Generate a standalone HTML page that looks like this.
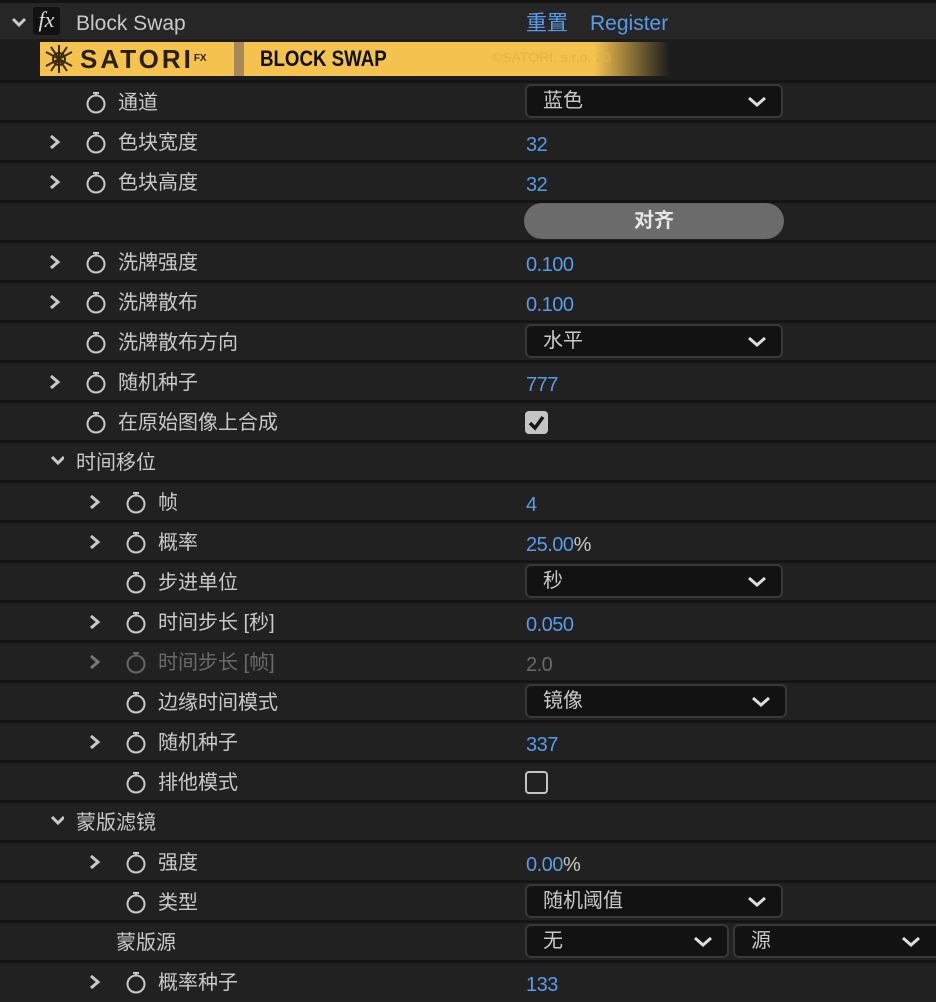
<!DOCTYPE html>
<html><head><meta charset="utf-8"><style>
*{margin:0;padding:0;box-sizing:border-box}
body{width:936px;height:1002px;background:#1f1f1f;overflow:hidden;position:relative;font-family:"Liberation Sans","Noto Sans CJK SC",sans-serif;color:#c9c9c9;font-size:20px}
.hdr{position:absolute;left:0;top:0;width:936px;height:42px;background:#262626;border-top:3px solid #141414}
.r{position:absolute;left:0;width:936px;height:40px;border-top:3px solid #141414;background:#212121}
.t{position:absolute;top:6px;line-height:28px;white-space:nowrap}
.v{position:absolute;left:526px;top:8px;line-height:28px;color:#5a9be8;letter-spacing:-0.5px}
.v span{color:#c9c9c9}
.sw{position:absolute;top:7px;width:22px;height:24px}
.chr{position:absolute;top:11px;width:14px;height:16px}
.dd{position:absolute;left:525px;top:1px;width:258px;height:34px;background:#121212;border:2px solid #383838;border-radius:6px}
.dd .t{left:16px;top:1px}
.dd svg{position:absolute;right:14px;top:10px}
.btn{position:absolute;left:524px;top:0px;width:260px;height:36px;background:#6b6b6b;border-radius:18px;text-align:center;line-height:36px;color:#e6e6e6;font-weight:bold}
.cb{position:absolute;left:525px;top:8px;width:23px;height:23px;border-radius:4px}
.dim{color:#6a6a6a}
</style></head><body>
<div class="hdr">
<svg style="position:absolute;left:10px;top:12px" width="18" height="14"><path d="M3 4 L9 10 L15 4" stroke="#c9c9c9" stroke-width="3" fill="none"/></svg>
<div style="position:absolute;left:33px;top:4px;width:27px;height:28px;background:#111;border-radius:3px;color:#ddd;font-family:'Liberation Serif',serif;font-style:italic;font-size:22px;line-height:26px;text-align:center">fx</div>
<div class="t" style="left:76px;top:7px;font-size:21px">Block Swap</div>
<div class="t" style="left:526px;top:7px;color:#5a9be8;font-size:21px">重置</div>
<div class="t" style="left:590px;top:7px;color:#5a9be8;font-size:21px">Register</div>
</div>
<div style="position:absolute;left:0;top:39px;width:936px;height:42px;background:#1c1c1c"></div>
<div style="position:absolute;left:40px;top:42px;width:630px;height:34px;background:linear-gradient(90deg,#f4c24f 0,#f4c24f 88%,#1c1c1c 100%)">
<svg style="position:absolute;left:3px;top:2px" width="32" height="30"><g stroke="#3a2a10" stroke-width="2" fill="none"><circle cx="16" cy="15" r="6"/><path d="M16 1 L16 29 M3 8 L29 22 M3 22 L29 8 M8 3 L24 27 M24 3 L8 27"/></g></svg>
<div style="position:absolute;left:40px;top:2px;font-size:26px;font-weight:bold;letter-spacing:3px;color:#2a1f0c;line-height:30px">SATORI<span style="font-size:10px;vertical-align:top;letter-spacing:0">FX</span></div>
<div style="position:absolute;left:194px;top:0;width:10px;height:34px;background:#a8875a"></div>
<div style="position:absolute;left:220px;top:2px;font-size:22px;font-weight:bold;color:#111;line-height:30px;transform:scaleX(.85);transform-origin:left">BLOCK SWAP</div>
<div style="position:absolute;left:452px;top:7px;font-size:14px;color:#e2b245">©SATORI, s.r.o. 20</div>
</div>

<div class="r" style="top:80px"><svg class="sw" style="left:85px" viewBox="0 0 22 24"><circle cx="11" cy="14" r="8.5" stroke="#c9c9c9" stroke-width="2" fill="none"/><path d="M8 3h6M11 3v3" stroke="#c9c9c9" stroke-width="2"/></svg><div class="t" style="left:118px">通道</div><div class="dd"><div class="t">蓝色</div><svg width="20" height="12"><path d="M2 2 L10 9 L18 2" stroke="#ddd" stroke-width="3" fill="none"/></svg></div></div>

<div class="r" style="top:120px"><svg class="chr" style="left:48px"><path d="M3 2 L10 8 L3 14" stroke="#c9c9c9" stroke-width="3" fill="none"/></svg><svg class="sw" style="left:85px" viewBox="0 0 22 24"><circle cx="11" cy="14" r="8.5" stroke="#c9c9c9" stroke-width="2" fill="none"/><path d="M8 3h6M11 3v3" stroke="#c9c9c9" stroke-width="2"/></svg><div class="t" style="left:118px">色块宽度</div><div class="v">32</div></div>

<div class="r" style="top:160px"><svg class="chr" style="left:48px"><path d="M3 2 L10 8 L3 14" stroke="#c9c9c9" stroke-width="3" fill="none"/></svg><svg class="sw" style="left:85px" viewBox="0 0 22 24"><circle cx="11" cy="14" r="8.5" stroke="#c9c9c9" stroke-width="2" fill="none"/><path d="M8 3h6M11 3v3" stroke="#c9c9c9" stroke-width="2"/></svg><div class="t" style="left:118px">色块高度</div><div class="v">32</div></div>

<div class="r" style="top:200px"><div class="btn">对齐</div></div>

<div class="r" style="top:240px"><svg class="chr" style="left:48px"><path d="M3 2 L10 8 L3 14" stroke="#c9c9c9" stroke-width="3" fill="none"/></svg><svg class="sw" style="left:85px" viewBox="0 0 22 24"><circle cx="11" cy="14" r="8.5" stroke="#c9c9c9" stroke-width="2" fill="none"/><path d="M8 3h6M11 3v3" stroke="#c9c9c9" stroke-width="2"/></svg><div class="t" style="left:118px">洗牌强度</div><div class="v">0.100</div></div>

<div class="r" style="top:280px"><svg class="chr" style="left:48px"><path d="M3 2 L10 8 L3 14" stroke="#c9c9c9" stroke-width="3" fill="none"/></svg><svg class="sw" style="left:85px" viewBox="0 0 22 24"><circle cx="11" cy="14" r="8.5" stroke="#c9c9c9" stroke-width="2" fill="none"/><path d="M8 3h6M11 3v3" stroke="#c9c9c9" stroke-width="2"/></svg><div class="t" style="left:118px">洗牌散布</div><div class="v">0.100</div></div>

<div class="r" style="top:320px"><svg class="sw" style="left:85px" viewBox="0 0 22 24"><circle cx="11" cy="14" r="8.5" stroke="#c9c9c9" stroke-width="2" fill="none"/><path d="M8 3h6M11 3v3" stroke="#c9c9c9" stroke-width="2"/></svg><div class="t" style="left:118px">洗牌散布方向</div><div class="dd"><div class="t">水平</div><svg width="20" height="12"><path d="M2 2 L10 9 L18 2" stroke="#ddd" stroke-width="3" fill="none"/></svg></div></div>

<div class="r" style="top:360px"><svg class="chr" style="left:48px"><path d="M3 2 L10 8 L3 14" stroke="#c9c9c9" stroke-width="3" fill="none"/></svg><svg class="sw" style="left:85px" viewBox="0 0 22 24"><circle cx="11" cy="14" r="8.5" stroke="#c9c9c9" stroke-width="2" fill="none"/><path d="M8 3h6M11 3v3" stroke="#c9c9c9" stroke-width="2"/></svg><div class="t" style="left:118px">随机种子</div><div class="v">777</div></div>

<div class="r" style="top:400px"><svg class="sw" style="left:85px" viewBox="0 0 22 24"><circle cx="11" cy="14" r="8.5" stroke="#c9c9c9" stroke-width="2" fill="none"/><path d="M8 3h6M11 3v3" stroke="#c9c9c9" stroke-width="2"/></svg><div class="t" style="left:118px">在原始图像上合成</div><div class="cb" style="background:#c4c4c4"><svg width="23" height="23"><path d="M5 12 L10 17 L18 6" stroke="#151515" stroke-width="3.5" fill="none"/></svg></div></div>

<div class="r" style="top:440px"><svg class="chr" style="left:50px;top:12px" width="16" height="12"><path d="M2 2 L8 8 L14 2" stroke="#c9c9c9" stroke-width="3" fill="none"/></svg><div class="t" style="left:76px">时间移位</div></div>

<div class="r" style="top:480px"><svg class="chr" style="left:88px"><path d="M3 2 L10 8 L3 14" stroke="#c9c9c9" stroke-width="3" fill="none"/></svg><svg class="sw" style="left:125px" viewBox="0 0 22 24"><circle cx="11" cy="14" r="8.5" stroke="#c9c9c9" stroke-width="2" fill="none"/><path d="M8 3h6M11 3v3" stroke="#c9c9c9" stroke-width="2"/></svg><div class="t" style="left:158px">帧</div><div class="v">4</div></div>

<div class="r" style="top:520px"><svg class="chr" style="left:88px"><path d="M3 2 L10 8 L3 14" stroke="#c9c9c9" stroke-width="3" fill="none"/></svg><svg class="sw" style="left:125px" viewBox="0 0 22 24"><circle cx="11" cy="14" r="8.5" stroke="#c9c9c9" stroke-width="2" fill="none"/><path d="M8 3h6M11 3v3" stroke="#c9c9c9" stroke-width="2"/></svg><div class="t" style="left:158px">概率</div><div class="v">25.00<span>%</span></div></div>

<div class="r" style="top:560px"><svg class="sw" style="left:125px" viewBox="0 0 22 24"><circle cx="11" cy="14" r="8.5" stroke="#c9c9c9" stroke-width="2" fill="none"/><path d="M8 3h6M11 3v3" stroke="#c9c9c9" stroke-width="2"/></svg><div class="t" style="left:158px">步进单位</div><div class="dd"><div class="t">秒</div><svg width="20" height="12"><path d="M2 2 L10 9 L18 2" stroke="#ddd" stroke-width="3" fill="none"/></svg></div></div>

<div class="r" style="top:600px"><svg class="chr" style="left:88px"><path d="M3 2 L10 8 L3 14" stroke="#c9c9c9" stroke-width="3" fill="none"/></svg><svg class="sw" style="left:125px" viewBox="0 0 22 24"><circle cx="11" cy="14" r="8.5" stroke="#c9c9c9" stroke-width="2" fill="none"/><path d="M8 3h6M11 3v3" stroke="#c9c9c9" stroke-width="2"/></svg><div class="t" style="left:158px">时间步长 [秒]</div><div class="v">0.050</div></div>

<div class="r" style="top:640px"><svg class="chr" style="left:88px"><path d="M3 2 L10 8 L3 14" stroke="#777" stroke-width="3" fill="none"/></svg><svg class="sw" style="left:125px" viewBox="0 0 22 24"><circle cx="11" cy="14" r="8.5" stroke="#666" stroke-width="2" fill="none"/><path d="M8 3h6M11 3v3" stroke="#666" stroke-width="2"/></svg><div class="t dim" style="left:158px">时间步长 [帧]</div><div class="v dim">2.0</div></div>

<div class="r" style="top:680px"><svg class="sw" style="left:125px" viewBox="0 0 22 24"><circle cx="11" cy="14" r="8.5" stroke="#c9c9c9" stroke-width="2" fill="none"/><path d="M8 3h6M11 3v3" stroke="#c9c9c9" stroke-width="2"/></svg><div class="t" style="left:158px">边缘时间模式</div><div class="dd" style="width:262px"><div class="t">镜像</div><svg width="20" height="12"><path d="M2 2 L10 9 L18 2" stroke="#ddd" stroke-width="3" fill="none"/></svg></div></div>

<div class="r" style="top:720px"><svg class="chr" style="left:88px"><path d="M3 2 L10 8 L3 14" stroke="#c9c9c9" stroke-width="3" fill="none"/></svg><svg class="sw" style="left:125px" viewBox="0 0 22 24"><circle cx="11" cy="14" r="8.5" stroke="#c9c9c9" stroke-width="2" fill="none"/><path d="M8 3h6M11 3v3" stroke="#c9c9c9" stroke-width="2"/></svg><div class="t" style="left:158px">随机种子</div><div class="v">337</div></div>

<div class="r" style="top:760px"><svg class="sw" style="left:125px" viewBox="0 0 22 24"><circle cx="11" cy="14" r="8.5" stroke="#c9c9c9" stroke-width="2" fill="none"/><path d="M8 3h6M11 3v3" stroke="#c9c9c9" stroke-width="2"/></svg><div class="t" style="left:158px">排他模式</div><div class="cb" style="border:2.5px solid #c4c4c4"></div></div>

<div class="r" style="top:800px"><svg class="chr" style="left:50px;top:12px" width="16" height="12"><path d="M2 2 L8 8 L14 2" stroke="#c9c9c9" stroke-width="3" fill="none"/></svg><div class="t" style="left:76px">蒙版滤镜</div></div>

<div class="r" style="top:840px"><svg class="chr" style="left:88px"><path d="M3 2 L10 8 L3 14" stroke="#c9c9c9" stroke-width="3" fill="none"/></svg><svg class="sw" style="left:125px" viewBox="0 0 22 24"><circle cx="11" cy="14" r="8.5" stroke="#c9c9c9" stroke-width="2" fill="none"/><path d="M8 3h6M11 3v3" stroke="#c9c9c9" stroke-width="2"/></svg><div class="t" style="left:158px">强度</div><div class="v">0.00<span>%</span></div></div>

<div class="r" style="top:880px"><svg class="sw" style="left:125px" viewBox="0 0 22 24"><circle cx="11" cy="14" r="8.5" stroke="#c9c9c9" stroke-width="2" fill="none"/><path d="M8 3h6M11 3v3" stroke="#c9c9c9" stroke-width="2"/></svg><div class="t" style="left:158px">类型</div><div class="dd"><div class="t">随机阈值</div><svg width="20" height="12"><path d="M2 2 L10 9 L18 2" stroke="#ddd" stroke-width="3" fill="none"/></svg></div></div>

<div class="r" style="top:920px"><div class="t" style="left:116px">蒙版源</div><div class="dd" style="width:204px"><div class="t">无</div><svg width="20" height="12"><path d="M2 2 L10 9 L18 2" stroke="#ddd" stroke-width="3" fill="none"/></svg></div><div class="dd" style="left:733px;width:210px"><div class="t">源</div><svg width="20" height="12" style="right:20px"><path d="M2 2 L10 9 L18 2" stroke="#ddd" stroke-width="3" fill="none"/></svg></div></div>

<div class="r" style="top:960px;height:42px"><svg class="chr" style="left:88px"><path d="M3 2 L10 8 L3 14" stroke="#c9c9c9" stroke-width="3" fill="none"/></svg><svg class="sw" style="left:125px" viewBox="0 0 22 24"><circle cx="11" cy="14" r="8.5" stroke="#c9c9c9" stroke-width="2" fill="none"/><path d="M8 3h6M11 3v3" stroke="#c9c9c9" stroke-width="2"/></svg><div class="t" style="left:158px">概率种子</div><div class="v">133</div></div>
</body></html>
